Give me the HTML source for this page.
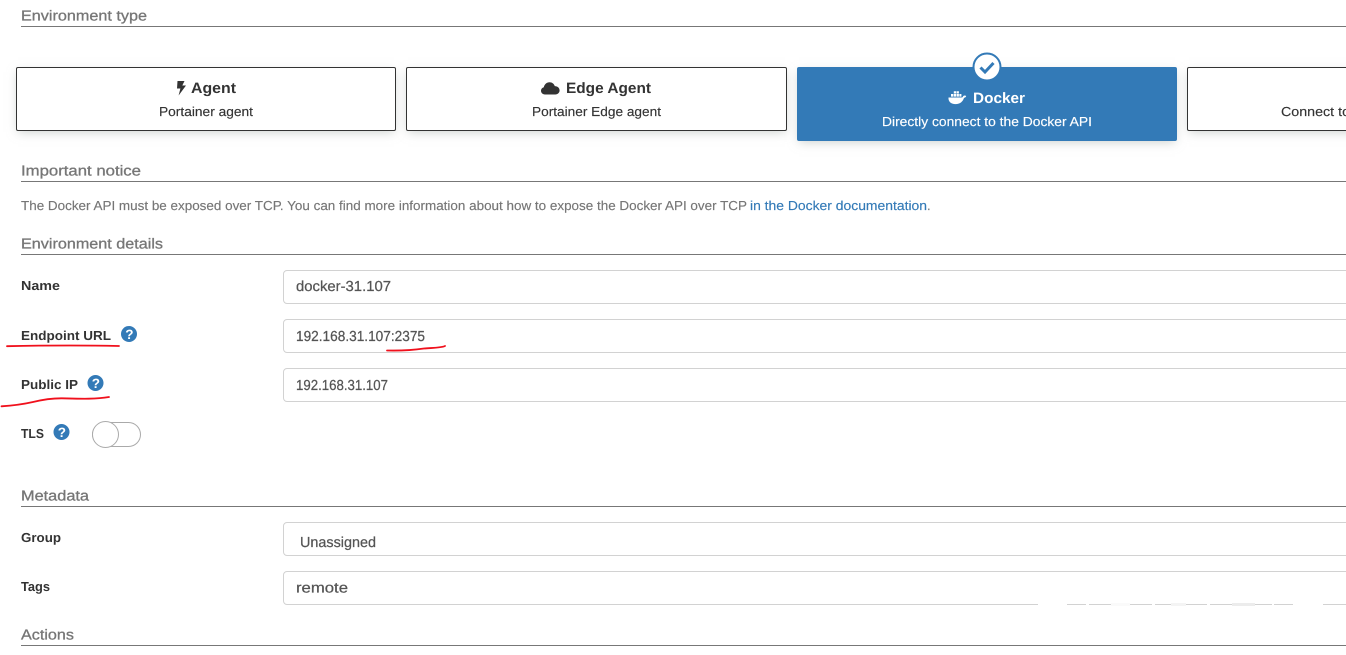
<!DOCTYPE html>
<html><head><meta charset="utf-8"><title>Environment</title>
<style>
html,body{margin:0;padding:0;background:#fff;width:1346px;height:655px;overflow:hidden}
.b{position:absolute;box-sizing:border-box}
.card{top:67px;height:64px;background:#fff;border:1px solid #333;border-radius:2px;box-shadow:0 3px 10px -2px rgba(161,170,166,.55)}
.inp{left:283px;width:1080px;background:#fff;border:1px solid #d2d2d2;border-radius:4px}
.hr{left:21px;width:1325px;height:1px;background:#777}
svg{position:absolute;left:0;top:0}
text{font-family:"Liberation Sans",sans-serif;font-size:12.5px;text-rendering:geometricPrecision}
.h{font-size:14.5px;fill:#767676;stroke:#767676;stroke-width:.3px}
.l{font-weight:bold;font-size:13px;fill:#333}
.i{font-size:14.5px;fill:#555;stroke:#555;stroke-width:.25px}
.t{font-weight:bold;font-size:15px;fill:#333}
.s{font-size:13px;fill:#333;stroke:#333;stroke-width:.15px}
.n{font-size:13px;fill:#767676;stroke:#767676;stroke-width:.15px}
</style></head><body>
<div class="b hr" style="top:26px"></div>
<div class="b hr" style="top:181px"></div>
<div class="b hr" style="top:254px"></div>
<div class="b hr" style="top:506px"></div>
<div class="b hr" style="top:645px"></div>
<div class="b card" style="left:16px;width:380px"></div>
<div class="b card" style="left:406px;width:381px"></div>
<div class="b card" style="left:797px;width:380px;height:74px;background:#337ab7;border-color:#337ab7"></div>
<div class="b card" style="left:1187px;width:200px"></div>
<div class="b inp" style="top:270px;height:33.5px"></div>
<div class="b inp" style="top:319px;height:34px"></div>
<div class="b inp" style="top:368px;height:34px"></div>
<div class="b inp" style="top:522px;height:34px"></div>
<div class="b inp" style="top:571px;height:34px"></div>
<div class="b" style="left:92px;top:422px;width:49px;height:25px;border:1px solid #aaa;border-radius:13px;background:#fff"></div>
<div class="b" style="left:92px;top:421px;width:27px;height:27px;border:1px solid #aaa;border-radius:50%;background:#fff"></div>
<div class="b" style="left:1038px;top:603px;width:29px;height:3px;background:#fff"></div>
<div class="b" style="left:1086px;top:603px;width:3px;height:3px;background:#fff"></div>
<div class="b" style="left:1111px;top:603px;width:19px;height:3px;background:#fafafa"></div>
<div class="b" style="left:1152px;top:603px;width:3px;height:3px;background:#fff"></div>
<div class="b" style="left:1171px;top:603px;width:15px;height:3px;background:#f4f4f4"></div>
<div class="b" style="left:1207px;top:603px;width:3px;height:3px;background:#fff"></div>
<div class="b" style="left:1232px;top:603px;width:23px;height:3px;background:#ececec"></div>
<div class="b" style="left:1272px;top:603px;width:2px;height:3px;background:#fff"></div>
<div class="b" style="left:1293px;top:603px;width:30px;height:3px;background:#fff"></div>

<svg width="1346" height="655" viewBox="0 0 1346 655" xmlns="http://www.w3.org/2000/svg">
<text class="h" x="21" y="20.500" textLength="126" lengthAdjust="spacingAndGlyphs">Environment type</text>
<text class="h" x="21" y="175.500" textLength="120" lengthAdjust="spacingAndGlyphs">Important notice</text>
<text class="h" x="21" y="248.500" textLength="142" lengthAdjust="spacingAndGlyphs">Environment details</text>
<text class="h" x="21" y="500.500" textLength="68" lengthAdjust="spacingAndGlyphs">Metadata</text>
<text class="h" x="21" y="639.500" textLength="53" lengthAdjust="spacingAndGlyphs">Actions</text>

<path d="M177.500 81h7l-2.200 4.500h3.700l-7.400 10 1.800-7h-3.400z" fill="#333"/>
<text class="t" x="191" y="93" textLength="45" lengthAdjust="spacingAndGlyphs">Agent</text>
<text class="s" x="159" y="116" textLength="94" lengthAdjust="spacingAndGlyphs">Portainer agent</text>

<path d="M545 94.500c-2.500 0-4-1.700-4-3.700 0-1.800 1.200-3.200 2.800-3.600.6-3 3-5 5.700-5 2.600 0 4.600 1.600 5.300 3.900 2.900 0 4.800 2 4.800 4.300 0 2.300-1.800 4.100-4.300 4.100z" fill="#333"/>
<text class="t" x="566" y="93" textLength="85" lengthAdjust="spacingAndGlyphs">Edge Agent</text>
<text class="s" x="532" y="116" textLength="129" lengthAdjust="spacingAndGlyphs">Portainer Edge agent</text>

<path d="M948.500 97.500h13c1 0 1.400-.5 1.800-1.500.8-.6 2-.6 2.900 0-.3 1.100-1 1.700-2.200 1.900-1 3.600-3.900 6.200-8.500 6.200-4.400 0-7.400-2.400-7-6.600z" fill="#fff"/>
<path d="M951 94h2.300v2.600H951zM953.800 94h2.300v2.600h-2.300zM956.600 94h2.300v2.600h-2.300zM953.800 91.300h2.300v2.200h-2.300zM956.600 91.300h2.300v2.200h-2.300zM959.400 94h2v2.600h-2z" fill="#fff"/>
<text x="973" y="103" textLength="52" lengthAdjust="spacingAndGlyphs" style="font-size:15px;font-weight:bold;fill:#fff">Docker</text>
<text x="882" y="126" textLength="210" lengthAdjust="spacingAndGlyphs" style="font-size:13px;fill:#fff;stroke:#fff;stroke-width:.15px">Directly connect to the Docker API</text>
<circle cx="987" cy="67" r="13.500" fill="#fff" stroke="#337ab7" stroke-width="2"/>
<path d="M980.500 67.500l4.500 4.500 8.500-9" fill="none" stroke="#337ab7" stroke-width="3"/>

<text class="s" x="1281" y="116" textLength="69" lengthAdjust="spacingAndGlyphs">Connect to</text>

<text class="n" x="21" y="210" textLength="726" lengthAdjust="spacingAndGlyphs">The Docker API must be exposed over TCP. You can find more information about how to expose the Docker API over TCP</text>
<text x="750" y="210" textLength="177" lengthAdjust="spacingAndGlyphs" style="font-size:13px;fill:#337ab7;stroke:#337ab7;stroke-width:.15px">in the Docker documentation</text>
<text class="n" x="927" y="210">.</text>

<text class="l" x="21" y="290" textLength="39" lengthAdjust="spacingAndGlyphs">Name</text>
<text class="l" x="21" y="340" textLength="90" lengthAdjust="spacingAndGlyphs">Endpoint URL</text>
<text class="l" x="21" y="389" textLength="57" lengthAdjust="spacingAndGlyphs">Public IP</text>
<text class="l" x="21" y="438" textLength="23" lengthAdjust="spacingAndGlyphs">TLS</text>
<text class="l" x="21" y="542" textLength="40" lengthAdjust="spacingAndGlyphs">Group</text>
<text class="l" x="21" y="591" textLength="29" lengthAdjust="spacingAndGlyphs">Tags</text>

<g fill="#337ab7"><circle cx="129" cy="334" r="8"/><circle cx="95.500" cy="383" r="8"/><circle cx="61.500" cy="432" r="8"/></g>
<text x="125.300" y="338.800" style="font-size:13.500px;font-weight:bold;fill:#fff">?</text>
<text x="91.800" y="387.800" style="font-size:13.500px;font-weight:bold;fill:#fff">?</text>
<text x="57.800" y="436.800" style="font-size:13.500px;font-weight:bold;fill:#fff">?</text>

<text class="i" x="296" y="291" textLength="95" lengthAdjust="spacingAndGlyphs">docker-31.107</text>
<text class="i" x="296" y="341" textLength="129" lengthAdjust="spacingAndGlyphs">192.168.31.107:2375</text>
<text class="i" x="296" y="390" textLength="92" lengthAdjust="spacingAndGlyphs">192.168.31.107</text>
<text class="i" x="300" y="547" textLength="76" lengthAdjust="spacingAndGlyphs">Unassigned</text>
<text class="i" x="296" y="592.500" textLength="52" lengthAdjust="spacingAndGlyphs">remote</text>

<g fill="none" stroke="#f0101c" stroke-width="1.800" stroke-linecap="round">
<path d="M7 346.200C40 345.500 85 345.300 119 346"/>
<path d="M387 350.500C400 350.800 412 350.300 424 348.500C432 347.800 441 348 445 346"/>
<path d="M1.500 406.300C14 405.500 22 404.500 33 402C42 399.800 50 398.200 62 398.300C78 398.700 95 399.500 109 397"/>
</g>
</svg>
</body></html>
